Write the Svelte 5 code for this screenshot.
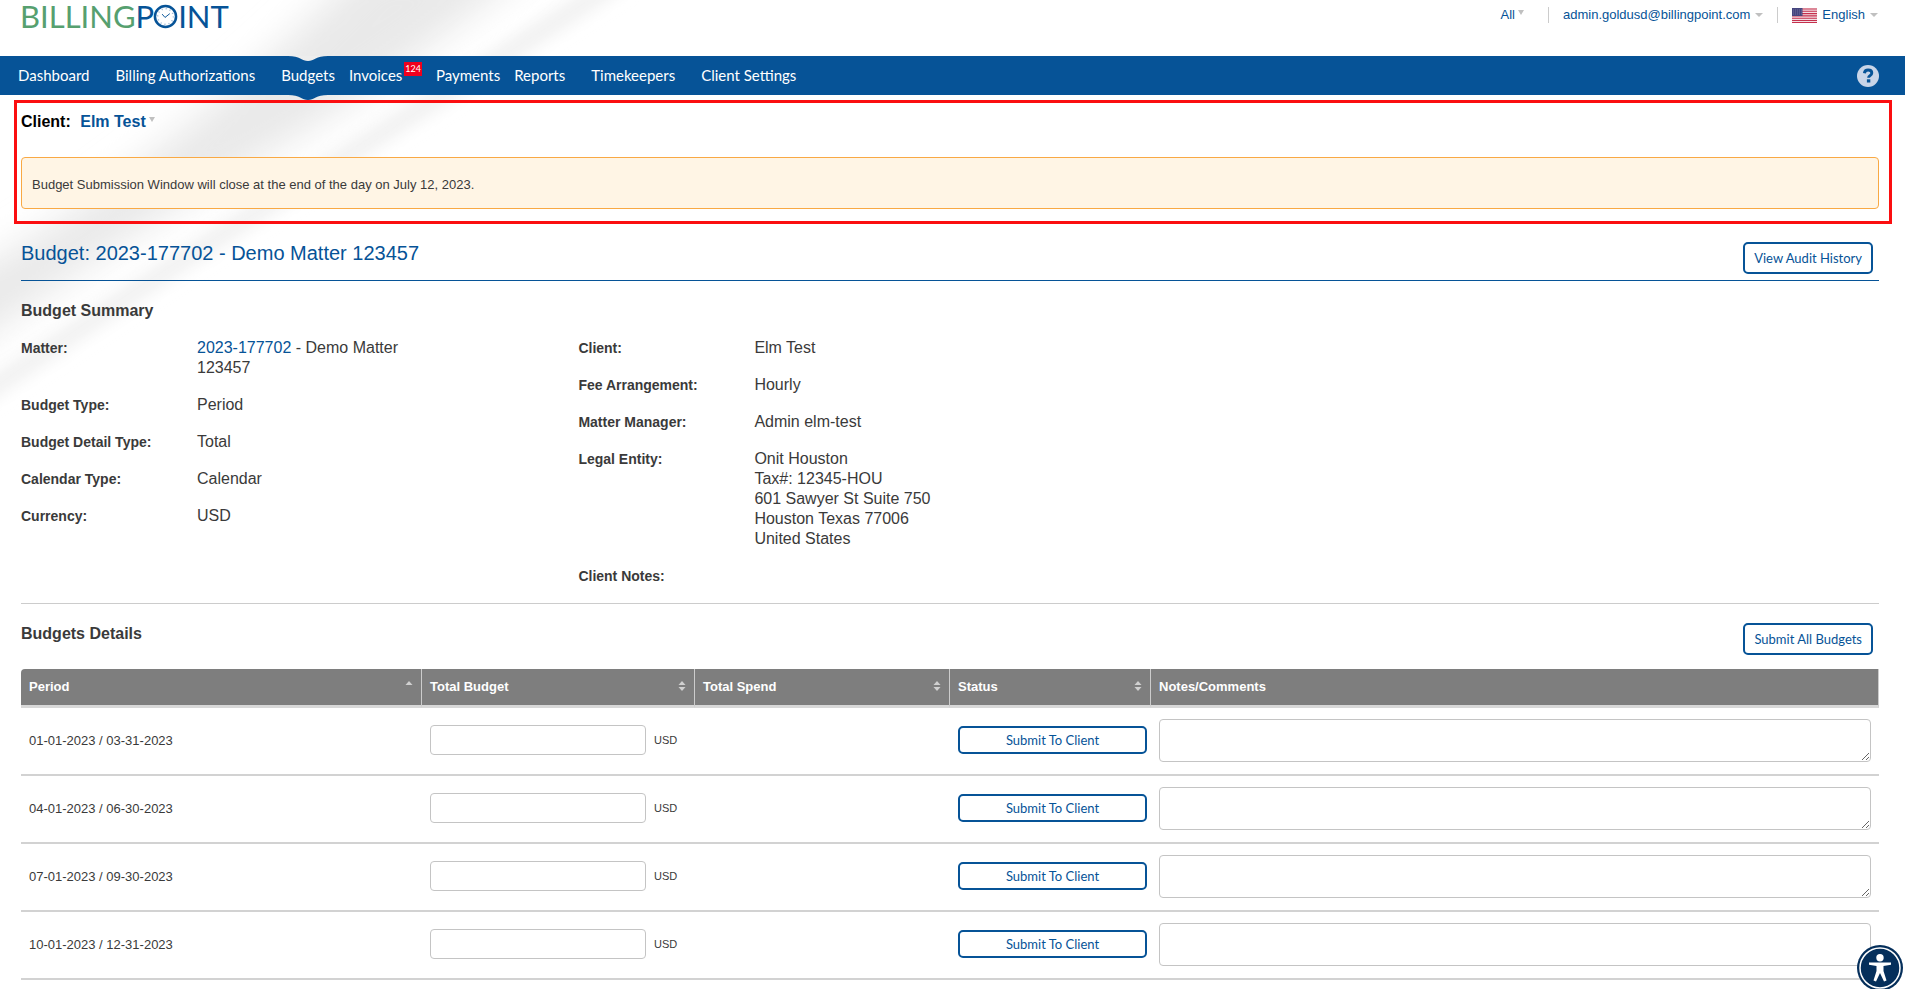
<script lang="ts">
	const nav = [
		{ label: 'Dashboard', wide: true },
		{ label: 'Billing Authorizations', wide: true },
		{ label: 'Budgets', active: true },
		{ label: 'Invoices', count: 124 },
		{ label: 'Payments' },
		{ label: 'Reports', wide: true },
		{ label: 'Timekeepers', wide: true },
		{ label: 'Client Settings' }
	];

	const matter = { number: '2023-177702', name: 'Demo Matter 123457' };

	const left = [
		['Budget Type:', 'Period'],
		['Budget Detail Type:', 'Total'],
		['Calendar Type:', 'Calendar'],
		['Currency:', 'USD']
	];

	const right = [
		['Client:', 'Elm Test'],
		['Fee Arrangement:', 'Hourly'],
		['Matter Manager:', 'Admin elm-test'],
		[
			'Legal Entity:',
			'Onit Houston\nTax#: 12345-HOU\n601 Sawyer St Suite 750\nHouston Texas 77006\nUnited States'
		],
		['Client Notes:', '']
	];

	const columns = [
		{ label: 'Period', sort: 'asc', cls: 'period' },
		{ label: 'Total Budget', sort: 'both', cls: 'budget' },
		{ label: 'Total Spend', sort: 'both', cls: 'spend' },
		{ label: 'Status', sort: 'both', cls: 'status' },
		{ label: 'Notes/Comments', sort: '', cls: 'notes' }
	];

	let periods = $state([
		{ range: '01-01-2023 / 03-31-2023', total: '', notes: '' },
		{ range: '04-01-2023 / 06-30-2023', total: '', notes: '' },
		{ range: '07-01-2023 / 09-30-2023', total: '', notes: '' },
		{ range: '10-01-2023 / 12-31-2023', total: '', notes: '' }
	]);
</script>

<div class="page">
	<svg class="swoosh" viewBox="0 0 660 440" aria-hidden="true">
		<defs>
			<filter id="soft" x="-20%" y="-20%" width="140%" height="140%">
				<feGaussianBlur stdDeviation="18" />
			</filter>
			<filter id="softer" x="-20%" y="-20%" width="140%" height="140%">
				<feGaussianBlur stdDeviation="8" />
			</filter>
		</defs>
		<path d="M-60 290Q150 180 370 -40L540 -40Q390 80 290 140Q130 230 -60 370Z" fill="#e9e9e9" filter="url(#soft)" />
		<path d="M-40 410Q120 300 260 210Q420 110 620 -20" fill="none" stroke="#f1f1f1" stroke-width="20" filter="url(#softer)" />
	</svg>

	<header>
		<a class="logo" href="#home" aria-label="BillingPoint">
			<span class="green">BILLING</span><span>P</span>
			<svg viewBox="0 0 26 26" aria-hidden="true">
				<circle cx="13" cy="13" r="11" fill="#fff" stroke="#065397" stroke-width="2.6" />
				<circle cx="13" cy="13" r="8.2" fill="none" stroke="#8fb0d3" stroke-width="1.6" stroke-dasharray="1 3.29" />
				<path d="M9.500 10.500l3 3.500 5-4" fill="none" stroke="#065397" stroke-width="1" />
			</svg>
			<span>INT</span>
		</a>
		<div class="account">
			<a class="all" href="#all">All<i class="caret high"></i></a>
			<a class="user" href="#account">admin.goldusd@billingpoint.com<i class="caret"></i></a>
			<a class="lang" href="#language">
				<svg viewBox="0 0 25 15" aria-hidden="true">
					<rect width="25" height="15" fill="#f3dfe4" />
					<path d="M0 1h25M0 3.3h25M0 5.6h25M0 7.9h25M0 10.2h25M0 12.5h25M0 14.5h25" stroke="#c5304d" stroke-width="1.1" />
					<rect width="10.5" height="8" fill="#46467f" />
					<path d="M1 2h9M1 4h9M1 6h9" stroke="#8484ad" stroke-width=".7" stroke-dasharray="1 1" />
				</svg>
				English<i class="caret"></i>
			</a>
		</div>
	</header>

	<nav>
		{#each nav as item}
			<a href="#{item.label}" class:wide={item.wide} class:active={item.active}>
				{item.label}{#if item.count}<span class="count">{item.count}</span>{/if}
				{#if item.active}
					<svg class="notch" viewBox="0 0 40 6" aria-hidden="true"><path d="M0 0H40C28 0 26 5 20 5S12 0 0 0Z" fill="#ededed" /></svg>
					<svg class="bump" viewBox="0 0 40 6" aria-hidden="true"><path d="M0 0H40C28 0 26 5 20 5S12 0 0 0Z" fill="#065397" /></svg>
				{/if}
			</a>
		{/each}
		<button class="help" aria-label="Help">
			<svg viewBox="0 0 22 22" aria-hidden="true">
				<circle cx="11" cy="11" r="11" fill="#c9d5e8" />
				<path d="M7.400 8.200C7.700 5.900 9 5 11.100 5c2.200 0 3.700 1.200 3.700 3 0 2.600-3.200 2.600-3.200 4.700" fill="none" stroke="#065397" stroke-width="2.900" />
				<rect x="9.900" y="14.300" width="3.400" height="3.200" fill="#065397" />
			</svg>
		</button>
	</nav>

	<main>
		<section class="window">
			<p class="client">Client: <a href="#client">Elm Test<i class="caret high"></i></a></p>
			<p class="notice">Budget Submission Window will close at the end of the day on July 12, 2023.</p>
		</section>

		<div class="title">
			<h1>Budget: {matter.number} - {matter.name}</h1>
			<button class="btn">View Audit History</button>
		</div>

		<h2>Budget Summary</h2>
		<div class="summary">
			<dl>
				<dt>Matter:</dt>
				<dd><a href="#matter">{matter.number}</a> - {matter.name}</dd>
				{#each left as [label, value]}
					<dt>{label}</dt>
					<dd>{value}</dd>
				{/each}
			</dl>
			<dl>
				{#each right as [label, value]}
					<dt>{label}</dt>
					<dd>{value}</dd>
				{/each}
			</dl>
		</div>

		<div class="details">
			<h2>Budgets Details</h2>
			<button class="btn">Submit All Budgets</button>
		</div>

		<table>
			<thead>
				<tr>
					{#each columns as col}
						<th class={col.cls}>
							<div>
								{col.label}
								{#if col.sort}
									<svg viewBox="0 0 8 10" aria-hidden="true">
										<path d="M0.500 4L4 0L7.500 4Z" fill="#d0d0d0" />
										{#if col.sort === 'both'}<path d="M0.500 6L4 10L7.500 6Z" fill="#d0d0d0" />{/if}
									</svg>
								{/if}
							</div>
						</th>
					{/each}
				</tr>
			</thead>
			<tbody>
				{#each periods as period}
					<tr>
						<td>{period.range}</td>
						<td>
							<label class="amount">
								<input type="text" bind:value={period.total} aria-label="Total budget for {period.range}" />
								USD
							</label>
						</td>
						<td></td>
						<td class="action"><button class="btn submit">Submit To Client</button></td>
						<td><textarea bind:value={period.notes} aria-label="Notes for {period.range}"></textarea></td>
					</tr>
				{/each}
			</tbody>
		</table>
	</main>

	<button class="a11y" aria-label="Accessibility options">
		<svg viewBox="0 0 46 46" aria-hidden="true">
			<circle cx="23" cy="23" r="23" fill="#052f5b" />
			<circle cx="23" cy="23" r="20" fill="none" stroke="#fff" stroke-width="1.500" />
			<circle cx="23" cy="12.700" r="3.700" fill="#fff" />
			<path d="M12 17.500H34V19.800L26.500 21V26L29.500 35.500L27 36.500L23 28L19 36.500L16.500 35.500L19.500 26V21L12 19.800Z" fill="#fff" />
		</svg>
	</button>
</div>

<style>
	:global(body) {
		margin: 0;
		background: #fff;
	}

	.page {
		position: relative;
		font-family: 'Liberation Sans', Arial, sans-serif;
		font-size: 13px;
		color: #3a3a3a;
	}

	.swoosh {
		position: absolute;
		top: 0;
		left: 0;
		width: 660px;
		z-index: -1;
	}

	a {
		color: #065397;
		text-decoration: none;
	}

	p,
	h1,
	h2,
	dl,
	dd {
		margin: 0;
	}

	button {
		cursor: pointer;
	}

	header {
		display: flex;
		justify-content: space-between;
		align-items: flex-start;
		height: 56px;
		padding: 0 27px 0 20px;
	}

	.logo {
		display: flex;
		align-items: center;
		font-family: Lato, sans-serif;
		font-size: 31px;
		line-height: 33px;
	}

	.logo svg {
		width: 25px;
		height: 25px;
		margin-left: -1px;
	}

	.green {
		color: #56a06f;
	}

	.account {
		display: flex;
		padding-top: 7px;
		line-height: 16px;
	}

	.account a {
		display: flex;
		align-items: center;
	}

	.account .user {
		margin-left: 24px;
		padding: 0 14px;
		border: solid #ccc;
		border-width: 0 1px;
	}

	.lang svg {
		width: 25px;
		height: 15px;
		margin: 0 5px 0 14px;
	}

	.caret {
		display: inline-block;
		margin-left: 5px;
		border: 4px solid transparent;
		border-top: 4px solid #c0c0c0;
		border-bottom: 0;
	}

	.caret.high {
		margin: 0 0 5px 3px;
		border-width: 5px 3px 0;
	}

	nav {
		display: flex;
		align-items: center;
		height: 39px;
		padding: 0 26px 0 11px;
		background: #065397;
		font-family: Lato, sans-serif;
		font-size: 15px;
	}

	nav a {
		position: relative;
		display: flex;
		padding: 0 7px;
		color: #fff;
		line-height: 39px;
	}

	nav .wide {
		margin-right: 12px;
	}

	.count {
		height: 14px;
		margin: 6px 0 0 2px;
		padding: 0 1px;
		background: #f0001c;
		font-size: 9px;
		line-height: 14px;
	}

	.notch,
	.bump {
		position: absolute;
		left: calc(50% - 20px);
		width: 40px;
		height: 6px;
	}

	.notch {
		top: 0;
	}

	.bump {
		top: 100%;
	}

	.help {
		margin-left: auto;
		padding: 0;
		border: 0;
		background: none;
	}

	.help svg {
		display: block;
		width: 22px;
		height: 22px;
	}

	main {
		padding: 5px 26px 8px 21px;
	}

	.window {
		margin: 0 -13px 0 -7px;
		padding: 9px 10px 12px 4px;
		border: 3px solid #fb0e10;
	}

	.client {
		color: #000;
		font-size: 16px;
		font-weight: bold;
		line-height: 20px;
	}

	.client a {
		display: inline-flex;
		align-items: center;
		margin-left: 5px;
	}

	.notice {
		margin-top: 25px;
		padding: 19px 10px 15px;
		border: 1px solid #f9a944;
		border-radius: 4px;
		background: #fff5e5;
		line-height: 16px;
	}

	.title {
		display: flex;
		justify-content: space-between;
		align-items: flex-start;
		margin-top: 12px;
		padding: 6px 6px 6px 0;
		border-bottom: 1px solid #065397;
	}

	h1 {
		color: #065397;
		font-size: 20px;
		font-weight: normal;
		line-height: 22px;
	}

	.btn {
		height: 32px;
		padding: 0 9px;
		border: 2px solid #065397;
		border-radius: 5px;
		background: #fff;
		color: #065397;
		font-family: Lato, sans-serif;
		font-size: 13px;
	}

	h2 {
		font-size: 16px;
		line-height: 20px;
	}

	.title + h2 {
		margin-top: 20px;
	}

	.summary {
		display: grid;
		grid-template-columns: 30% 30%;
		align-items: start;
		padding: 17px 0 17px;
		border-bottom: 1px solid #ccc;
	}

	dl {
		display: grid;
		grid-template-columns: 176px 240px;
		row-gap: 17px;
		line-height: 20px;
	}

	dt {
		font-size: 14px;
		font-weight: bold;
	}

	dd {
		font-size: 16px;
		white-space: pre-line;
	}

	.details {
		display: flex;
		justify-content: space-between;
		align-items: flex-start;
		padding: 19px 6px 14px 0;
	}

	.details h2 {
		line-height: 22px;
	}

	table {
		width: 100%;
		border-collapse: separate;
		border-spacing: 0;
		table-layout: fixed;
	}

	th {
		height: 34px;
		padding: 0 8px 2px;
		border-right: 1px solid #ccc;
		border-bottom: 3px solid #d8d8d8;
		background: #7e7e7e;
		color: #fff;
		text-align: left;
	}

	th:first-child {
		border-top-left-radius: 4px;
	}

	th div {
		display: flex;
		justify-content: space-between;
		align-items: center;
	}

	th svg {
		width: 8px;
		height: 10px;
	}

	.period {
		width: 384px;
	}

	.budget {
		width: 256px;
	}

	.spend {
		width: 238px;
	}

	.status {
		width: 184px;
	}

	td {
		height: 64px;
		padding: 0 8px 2px;
		border-bottom: 2px solid #d2d2d2;
	}

	td.action {
		padding: 0 4px 2px 8px;
	}

	.amount {
		display: flex;
		align-items: center;
		gap: 8px;
		font-size: 11px;
	}

	input,
	textarea {
		box-sizing: border-box;
		border: 1px solid #c4c4c4;
		border-radius: 4px;
		background: #fff;
		font: inherit;
	}

	input {
		width: 216px;
		height: 30px;
		padding: 0 8px;
	}

	textarea {
		display: block;
		width: 100%;
		height: 43px;
		padding: 4px 8px;
		resize: vertical;
	}

	.submit {
		width: 100%;
		height: 28px;
	}

	.a11y {
		position: fixed;
		right: 2px;
		bottom: -2px;
		padding: 0;
		border: 0;
		background: none;
	}

	.a11y svg {
		display: block;
		width: 46px;
		height: 46px;
	}
</style>
